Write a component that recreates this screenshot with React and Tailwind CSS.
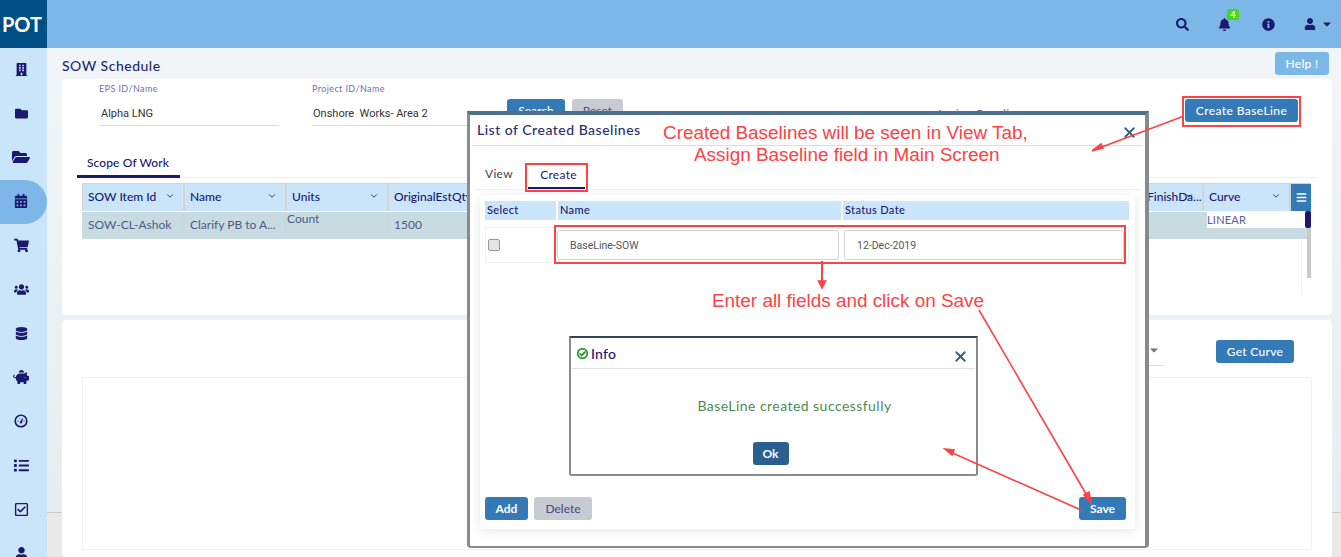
import React from "react";
import {
  FaBuilding, FaFolder, FaFolderOpen, FaCalendarAlt, FaShoppingCart, FaUsers, FaDatabase,
  FaPiggyBank, FaList, FaRegCheckSquare, FaUser, FaSearch, FaBell,
  FaInfoCircle, FaCaretDown, FaBars, FaRegCheckCircle,
} from "react-icons/fa";
import { LuChevronDown, LuX } from "react-icons/lu";

const navy = "text-[#191970]";

const Gauge = ({ size }) => (
  <svg width={size} height={size} viewBox="0 0 14 14" fill="none">
    <circle cx="7" cy="7" r="5.8" stroke="currentColor" strokeWidth="1.6" />
    <path d="M7 8 L8.6 4.6" stroke="currentColor" strokeWidth="1.3" />
    <circle cx="7" cy="8.2" r="1.2" fill="currentColor" />
    <path d="M3.4 7h1.2M9.4 7h1.2M5 4.2l.6.6" stroke="currentColor" strokeWidth="1" />
  </svg>
);

const sideIcons = [
  [FaBuilding, 13],
  [FaFolder, 13],
  [FaFolderOpen, 18],
  [FaCalendarAlt, 14],
  [FaShoppingCart, 15],
  [FaUsers, 15],
  [FaDatabase, 13],
  [FaPiggyBank, 16],
  [Gauge, 14],
  [FaList, 15],
  [FaRegCheckSquare, 15],
  [FaUser, 13],
];

const Sidebar = () => (
  <aside className="w-[47px] shrink-0 bg-[#cae5f9] flex flex-col overflow-hidden">
    <div className="h-[48px] shrink-0 bg-[#004f86] text-white text-[20px] font-bold flex items-center justify-center pr-[3px]">POT</div>
    <div className="flex flex-col">
      {sideIcons.map(([Icon, size], i) => (
        <div
          key={i}
          className={`h-[44px] shrink-0 flex items-center justify-center pr-[5px] pb-[2px] ${navy} ${i === 3 ? "bg-[#7cb7e8] rounded-r-[22px]" : ""}`}
        >
          <Icon size={size} />
        </div>
      ))}
    </div>
  </aside>
);

const TopBar = () => (
  <header className="h-[48px] shrink-0 bg-[#7cb7e8] flex items-center justify-end pr-[8px]">
    <div className={`flex items-center ${navy}`}>
      <FaSearch size={13} />
      <div className="relative ml-[29px]">
        <FaBell size={13} />
        <span className="absolute -top-[9px] left-[9px] w-[12px] h-[11px] rounded-[2px] bg-[#3ddc12] text-white text-[9px] font-bold leading-[11px] text-center">4</span>
      </div>
      <FaInfoCircle size={13} className="ml-[31px]" />
      <FaUser size={12} className="ml-[29px]" />
      <FaCaretDown size={12} className="ml-[5px]" />
    </div>
  </header>
);

const HeadCell = ({ w, label, chevron = true }) => (
  <div className={`${w} h-[27px] shrink-0 bg-[#cae5f9] border-r-2 border-[#d3d3d3] flex items-center pl-[5px] pb-[1px] text-[12px] font-medium ${navy} relative overflow-hidden whitespace-nowrap`}>
    {label}
    {chevron && <LuChevronDown size={10} className="absolute right-[8px] top-[7px]" />}
  </div>
);

const RowCell = ({ w, children, className = "" }) => (
  <div className={`${w} h-[27px] shrink-0 border-r border-[#d3d3d3] flex items-center pl-[6px] pb-[2px] text-[12px] text-[#4d5a8c] whitespace-nowrap overflow-hidden ${className}`}>
    {children}
  </div>
);

const ScopeCard = () => (
  <section className="h-[236px] ml-[15px] mr-[9px] bg-white rounded-[4px] relative flex flex-col shrink-0">
    <div className="flex pt-[5px] pl-[37px] h-[72px] shrink-0">
      <div className="w-[180px]">
        <div className="text-[9px] tracking-[0.4px] text-[#6f6fa3] leading-[10px]">EPS ID/Name</div>
        <div className="h-[26px] mt-[6px] border-b border-[#dedede] text-[11px] text-[#333] pl-[2px] pt-[6px] font-['Roboto',sans-serif]">Alpha LNG</div>
      </div>
      <div className="w-[160px] ml-[33px]">
        <div className="text-[9px] tracking-[0.4px] text-[#6f6fa3] leading-[10px]">Project ID/Name</div>
        <div className="h-[26px] mt-[6px] border-b border-[#dedede] text-[11px] text-[#333] pl-[1px] pt-[6px] whitespace-pre font-['Roboto',sans-serif]">Onshore  Works- Area 2</div>
      </div>
      <div className="flex ml-[35px] gap-[7px]">
        <button className="w-[58px] h-[23px] mt-[15px] rounded-[3px] bg-[#337ab7] text-white text-[12px] font-medium">Search</button>
        <button className="w-[51px] h-[23px] mt-[15px] rounded-[3px] bg-[#c8ccd2] text-[#4d4d8a] text-[12px]">Reset</button>
      </div>
      <div className="absolute left-[874px] top-[26px] text-[12px] tracking-[0.4px] text-[#6f6fa3]">Assign Baseline</div>
      <button className="absolute right-[34px] top-[20px] w-[113px] h-[23px] rounded-[3px] bg-[#337ab7] text-white text-[12px] font-medium tracking-[0.4px]">Create BaseLine</button>
    </div>

    <div className="ml-[15px] mr-[15px] border-b border-[#f0f0f0] h-[27px] shrink-0">
      <div className={`w-[103px] h-[27px] border-b-[3px] border-[#191970] pl-[10px] pt-[3px] text-[12px] font-medium tracking-[0.1px] ${navy}`}>Scope Of Work</div>
    </div>

    <div className="ml-[20px] mr-[21px] mt-[5px] flex flex-col">
      <div className="flex border-[#d3d3d3] border-y border-l h-[28px]">
        <HeadCell w="w-[102px]" label="SOW Item Id" />
        <HeadCell w="w-[102px]" label="Name" />
        <HeadCell w="w-[102px]" label="Units" />
        <HeadCell w="w-[103px]" label="OriginalEstQty" chevron={false} />
        <div className="flex-1 bg-[#cae5f9]" />
        <HeadCell w="w-[62px]" label="FinishDa..." />
        <HeadCell w="w-[87px]" label="Curve" />
        <div className="w-[20px] h-[27px] bg-[#337ab7] text-white flex items-center justify-center shrink-0">
          <FaBars size={11} />
        </div>
      </div>
      <div className="flex bg-[#c8dbe0] h-[27px] mr-[4px] mt-[1px]">
        <RowCell w="w-[102px]">SOW-CL-Ashok</RowCell>
        <RowCell w="w-[102px]">Clarify PB to A...</RowCell>
        <RowCell w="w-[102px]" className="!items-start !pl-[1px] leading-[14px]">Count</RowCell>
        <RowCell w="w-[103px]">1500</RowCell>
        <div className="flex-1" />
        <div className="w-[102px] h-[27px] shrink-0 border-l border-[#d3d3d3] pl-[1px]">
          <div className="h-[16px] bg-white text-[11px] text-[#5a5a9a] leading-[16px] tracking-[0.2px]">LINEAR</div>
        </div>
      </div>
    </div>
    <div className="absolute right-[21px] top-[132px] w-[4px] h-[67px] bg-[#c9c9c9]">
      <div className="h-[17px] -ml-[2px] w-[6px] bg-[#191970] rounded-[2px]" />
    </div>
    <div className="absolute right-[30px] top-[160px] h-[54px] w-px bg-[#f0f0f0]" />
  </section>
);

const CurveCard = () => (
  <section className="relative flex-1 ml-[15px] mr-[9px] mt-[5px] bg-white rounded-[4px] flex flex-col min-h-0">
    <div className="h-[57px] shrink-0 flex items-start justify-end pr-[38px] pt-[20px]">
      <div className="w-[20px] h-[26px] border-b border-[#dedede] mr-[52px] flex justify-center pt-[4px]">
        <FaCaretDown size={12} className="text-[#777]" />
      </div>
      <button className="w-[78px] h-[23px] rounded-[3px] bg-[#337ab7] text-white text-[12px] font-medium tracking-[0.3px]">Get Curve</button>
    </div>
    <div className="flex-1 ml-[20px] mr-[20px] mb-[7px] border border-[#f0f0f0]" />
  </section>
);

const Modal = () => (
  <div className="absolute left-[467px] top-[111px] w-[682px] h-[437px] border-l-[3px] border-r-[4px] border-b-[2px] border-t-[4px] border-[#8a8a8a] border-t-[#4b6f8c] bg-white rounded-b-[4px] flex flex-col">
    <div className="h-[31px] mx-[2px] border-b border-[#dedede] shrink-0 flex items-start pl-[5px] pt-[5px]">
      <span className="text-[14px] font-medium tracking-[0.5px] text-[#2b2f6e] leading-[20px]">List of Created Baselines</span>
    </div>
    <div className="h-[44px] mx-[5px] border-b border-[#f0f0f0] shrink-0 flex items-end">
      <div className="w-[44px] pl-[10px] pb-[6px] text-[12px] tracking-[0.3px] text-[#444]">View</div>
      <div className={`w-[57px] ml-[9px] h-[26px] border-b-[2px] border-[#191970] text-center pt-[3px] pl-[4px] text-[12px] tracking-[0.3px] ${navy}`}>Create</div>
    </div>
    <div className="mx-[10px] mt-[5px] h-[334px] shrink-0 rounded-[4px] shadow-[0_2px_12px_rgba(0,0,0,0.10)] flex flex-col pl-[5px] pr-[6px] pt-[6px]">
      <div className={`flex h-[19px] bg-[#cae5f9] text-[11px] font-medium tracking-[0.35px] ${navy} leading-[18px] shrink-0`}>
        <div className="w-[73px] pl-[2px] border-r-2 border-white">Select</div>
        <div className="w-[285px] pl-[2px] border-r-2 border-white">Name</div>
        <div className="flex-1 pl-[2px]">Status Date</div>
      </div>
      <div className="flex h-[36px] mt-[7px] border border-[#f0f0f0] shrink-0">
        <div className="w-[71px] flex items-center pl-[2px]">
          <div className="w-[12px] h-[12px] rounded-[2px] border border-[#999] bg-[#e4e4e4]" />
        </div>
        <div className="w-[287px] pt-[2px]">
          <div className="h-[30px] mr-[5px] rounded-[3px] border border-[#d3d3d3] pl-[12px] text-[10.5px] leading-[29px] text-[#555] font-['Roboto',sans-serif]">BaseLine-SOW</div>
        </div>
        <div className="flex-1 pt-[2px]">
          <div className="h-[30px] mr-[4px] rounded-[3px] border border-[#d3d3d3] pl-[12px] text-[10.5px] leading-[29px] text-[#555] font-['Roboto',sans-serif]">12-Dec-2019</div>
        </div>
      </div>
      <div className="flex-1" />
      <div className="flex items-center pb-[9px] gap-[6px] pr-[3px]">
        <button className="w-[43px] h-[23px] rounded-[3px] bg-[#337ab7] text-white text-[12px] font-bold">Add</button>
        <button className="w-[58px] h-[23px] rounded-[3px] bg-[#c8ccd2] text-[#4d4d8a] text-[12px] font-medium">Delete</button>
        <button className="ml-auto w-[47px] h-[23px] rounded-[3px] bg-[#337ab7] text-white text-[12px] font-bold">Save</button>
      </div>
    </div>
    <LuX size={17} strokeWidth={2.6} className="absolute right-[7px] top-[9px] text-[#2f5f82]" />
  </div>
);

const InfoDialog = () => (
  <div className="absolute left-[569px] top-[336px] w-[409px] h-[140px] border-2 border-[#8a8a8a] border-t-[#2f4858] bg-white rounded-b-[3px] flex flex-col">
    <div className="h-[31px] mx-[1px] border-b border-[#dedede] shrink-0 flex items-center pl-[5px] gap-[3px]">
      <FaRegCheckCircle size={11} stroke="currentColor" strokeWidth={24} className="text-[#0a8a0a]" />
      <span className={`text-[14px] font-medium tracking-[0.2px] ${navy}`}>Info</span>
    </div>
    <LuX size={17} strokeWidth={2.6} className="absolute right-[7px] top-[10px] text-[#2f5f82]" />
    <div className="h-[73px] flex items-center justify-center text-[14px] tracking-[0.45px] text-[#4f8a4f] pl-[42px]">BaseLine created successfully</div>
    <div className="flex justify-center pr-[6px]">
      <button className="w-[36px] h-[23px] rounded-[3px] bg-[#2a5f8f] text-white text-[12px] font-bold">Ok</button>
    </div>
  </div>
);

const redText = "absolute text-[#fb4245] text-[18.9px] leading-[22px] whitespace-nowrap font-['Liberation_Sans',sans-serif]";

const Annotations = () => (
  <>
    <div className={`${redText} left-[663px] top-[122px]`}>Created Baselines will be seen in View Tab,</div>
    <div className={`${redText} left-[694px] top-[144px]`}>Assign Baseline field in Main Screen</div>
    <div className={`${redText} left-[712px] top-[290px]`}>Enter all fields and click on Save</div>
    <div className="absolute left-[1182px] top-[96px] w-[119px] h-[31px] border-[2px] border-[#fb4245]" />
    <div className="absolute left-[525px] top-[163px] w-[63px] h-[29px] border-[2px] border-[#fb4245]" />
    <div className="absolute left-[554px] top-[225px] w-[572px] h-[39px] border-[2px] border-[#fb4245]" />
    <svg className="absolute left-0 top-0 pointer-events-none" width="1341" height="557" fill="none" stroke="#fb4245" strokeWidth="1.6">
      <path d="M1184 116 L1094 150" />
      <path d="M1092 151 L1101 144 L1103 148 Z" fill="#fb4245" />
      <path d="M822 261 L822 284" strokeWidth="2" />
      <path d="M822 288 L818.5 281 L825.5 281 Z" fill="#fb4245" />
      <path d="M979 310 L1089 499" />
      <path d="M1091 503 L1084 495 L1089 492 Z" fill="#fb4245" />
      <path d="M1081 510 L948 451" />
      <path d="M945 449 L954 450 L952 455 Z" fill="#fb4245" />
    </svg>
  </>
);

export default function App() {
  return (
    <div className="relative w-[1341px] h-[557px] overflow-hidden flex font-['Lato',sans-serif] bg-[#f1f6f9]">
      <Sidebar />
      <div className="relative flex-1 min-w-0 flex flex-col bg-linear-to-b from-[#f2f6f9] to-[#e6ecef]">
        <div className="absolute left-0 right-0 top-[512px] h-[45px] bg-[#e9e9e9] border-t border-[#cccccc]" />
        <div className="relative flex flex-col h-full">
          <TopBar />
          <div className="h-[31px] shrink-0 flex items-start justify-between pl-[15px] pr-[12px] pt-[10px]">
            <h1 className="text-[14px] font-medium tracking-[0.5px] text-[#1f2a6e] leading-[16px]">SOW Schedule</h1>
            <button className="w-[54px] h-[23px] -mt-[6px] rounded-[3px] bg-[#7cb7e8] text-white text-[12px] font-medium tracking-[0.3px]">Help !</button>
          </div>
          <ScopeCard />
          <CurveCard />
        </div>
      </div>
      <Modal />
      <InfoDialog />
      <Annotations />
    </div>
  );
}
